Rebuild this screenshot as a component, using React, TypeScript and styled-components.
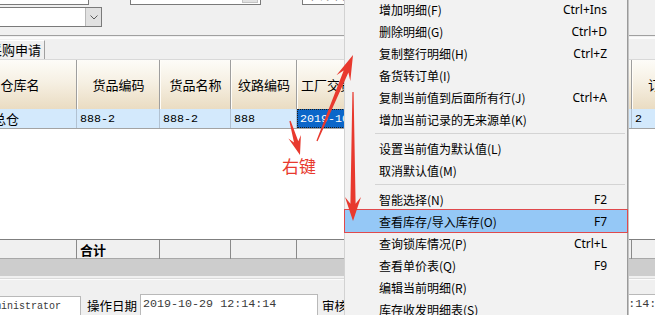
import { FC } from "react";
import styled, { createGlobalStyle } from "styled-components";

const COLS = "114px 83px 71px 66px 86px 80px 85px 84px 84px";
const RED = "#e8392e";

type Pt = [number, number];

// tapered annotation arrow, as drawn by a screenshot tool
const arrowPoints = (tail: Pt, tip: Pt, head: number, wing: number, neck: number, tailW: number) => {
  const dx = tip[0] - tail[0];
  const dy = tip[1] - tail[1];
  const len = Math.hypot(dx, dy);
  const ux = dx / len;
  const uy = dy / len;
  const nx = -uy;
  const ny = ux;
  const base: Pt = [tip[0] - ux * head, tip[1] - uy * head];
  const notch: Pt = [tip[0] - ux * head * 0.72, tip[1] - uy * head * 0.72];
  const p = (c: Pt, w: number) => `${(c[0] + nx * w).toFixed(1)},${(c[1] + ny * w).toFixed(1)}`;
  return [
    p(tail, tailW),
    p(notch, neck),
    p(base, wing),
    `${tip[0]},${tip[1]}`,
    p(base, -wing),
    p(notch, -neck),
    p(tail, -tailW),
  ].join(" ");
};

const GlobalStyle = createGlobalStyle`
  html, body {
    margin: 0;
    padding: 0;
    background: #f0f0f0;
  }
  body {
    font-family: "Noto Sans CJK SC", sans-serif;
  }
`;

const Page = styled.div`
  position: relative;
  width: 655px;
  height: 315px;
  overflow: hidden;
  background: #f0f0f0;
  display: flex;
  flex-direction: column;
`;

const TopRow = styled.div`
  height: 5px;
  flex-shrink: 0;
  overflow: hidden;
  display: flex;
  align-items: flex-end;
`;

const TopBox = styled.div<{ $gap: number; $width: number }>`
  margin-left: ${(p) => p.$gap}px;
  width: ${(p) => p.$width}px;
  height: 22px;
  flex-shrink: 0;
  box-sizing: border-box;
  border: 1px solid #7a7a7a;
  background: #fff;
  overflow: hidden;
  display: flex;
  justify-content: flex-end;
  align-items: flex-end;
  font-family: "Liberation Mono", monospace;
  font-size: 12px;
  line-height: 12px;
  color: #000;
`;

const TopBoxText = styled.span`
  flex: 1;
  padding: 0 0 0 3px;
  margin-bottom: 2px;
  letter-spacing: 2px;
`;

const TopBoxButton = styled.div`
  width: 16px;
  height: 18px;
  margin: 1px 2px 1px 0;
  background: #e1e1e1;
  border: 1px solid #c4c4c4;
  box-sizing: border-box;
`;

const Combo = styled.div`
  margin: 2px 0 0 -10px;
  width: 112px;
  height: 20px;
  flex-shrink: 0;
  box-sizing: border-box;
  border: 1px solid #7a7a7a;
  background: #fff;
  display: flex;
  justify-content: flex-end;
`;

const ComboButton = styled.div`
  width: 15px;
  background: #e1e1e1;
  border-left: 1px solid #b8b8b8;
  display: flex;
  align-items: center;
  justify-content: center;
`;

const Rule = styled.div<{ $top: number }>`
  margin-top: ${(p) => p.$top}px;
  height: 1px;
  flex-shrink: 0;
  border-top: 1px solid #a0a0a0;
  border-bottom: 2px solid #fbfbfb;
`;

const ThinRule = styled.div`
  margin-top: 2px;
  flex-shrink: 0;
  border-top: 1px solid #dadada;
  border-bottom: 1px solid #fcfcfc;
`;

const TabStrip = styled.div`
  margin-top: 1px;
  height: 19px;
  flex-shrink: 0;
  display: flex;
  border-bottom: 1px solid #d9d9d9;
`;

const Tab = styled.div`
  margin-left: -14px;
  padding: 0 3px;
  border-top: 1px solid #fff;
  border-right: 1px solid #a0a0a0;
  background: #f0f0f0;
  font-size: 13px;
  line-height: 18px;
  color: #000;
  white-space: nowrap;
`;

const Grid = styled.div`
  margin-left: -37px;
  width: max-content;
  flex-shrink: 0;
  display: flex;
  flex-direction: column;
`;

const HeaderRow = styled.div`
  display: grid;
  grid-template-columns: ${COLS};
  height: 49px;
  background: linear-gradient(#fdfcf8, #f6f0e3 45%, #eadcc2);
`;

const HeaderCell = styled.div`
  box-sizing: border-box;
  border-right: 1px solid #9e9e9e;
  border-left: 1px solid #fffdf8;
  display: flex;
  align-items: center;
  justify-content: center;
  font-size: 13px;
  color: #000;
  white-space: nowrap;
  overflow: hidden;
`;

const DataRow = styled.div`
  display: grid;
  grid-template-columns: ${COLS};
  height: 20px;
  box-sizing: border-box;
  border-bottom: 1px solid #a3a3a3;
  background: #d3e9fc;
`;

const DataCell = styled.div<{ $indent?: number; $selected?: boolean; $cjk?: boolean }>`
  box-sizing: border-box;
  border-right: 1px solid #b2c2d2;
  padding-left: ${(p) => p.$indent ?? 3}px;
  display: flex;
  align-items: center;
  font-family: ${(p) => (p.$cjk ? '"Noto Sans CJK SC", sans-serif' : '"Liberation Mono", monospace')};
  font-size: ${(p) => (p.$cjk ? 13 : 11.7)}px;
  color: ${(p) => (p.$selected ? "#fff" : "#000")};
  background: ${(p) => (p.$selected ? "#0b66c9" : "transparent")};
  outline: ${(p) => (p.$selected ? "1px dotted #1a1a1a" : "none")};
  outline-offset: -1px;
  white-space: nowrap;
  overflow: hidden;
`;

const GridBody = styled.div`
  height: 110px;
  background: #fff;
`;

const FooterRow = styled.div`
  display: grid;
  grid-template-columns: ${COLS};
  height: 20px;
  box-sizing: border-box;
  border-top: 1px solid #7f7f7f;
  border-bottom: 1px solid #a8a8a8;
  background: #f0f0f0;
`;

const FooterCell = styled.div`
  box-sizing: border-box;
  border-right: 1px solid #8a8a8a;
  padding-left: 3px;
  display: flex;
  align-items: center;
  font-size: 13px;
  font-weight: 700;
  color: #000;
`;

const ScrollBar = styled.div`
  height: 17px;
  flex-shrink: 0;
  background: #cdcdcd;
`;

const BottomRow = styled.div`
  margin-top: 14px;
  display: flex;
  align-items: flex-start;
  flex-shrink: 0;
`;

const Field = styled.div<{ $gap: number; $width: number; $size: number; $drop?: number }>`
  margin-left: ${(p) => p.$gap}px;
  margin-top: ${(p) => p.$drop ?? 0}px;
  width: ${(p) => p.$width}px;
  height: 24px;
  flex-shrink: 0;
  box-sizing: border-box;
  border: 1px solid #b9b9b9;
  background: #fff;
  padding: 2px 0 0 2px;
  font-family: "Liberation Mono", monospace;
  font-size: ${(p) => p.$size}px;
  line-height: 15px;
  color: #3a3a3a;
  white-space: nowrap;
  overflow: hidden;
`;

const Label = styled.div<{ $gap: number; $width: number }>`
  margin-left: ${(p) => p.$gap}px;
  margin-top: 3px;
  width: ${(p) => p.$width}px;
  flex-shrink: 0;
  font-size: 12.5px;
  line-height: 18px;
  color: #000;
  white-space: nowrap;
`;

const Menu = styled.div`
  position: absolute;
  left: 344px;
  top: -2px;
  width: 284px;
  box-sizing: border-box;
  background: #f2f2f2;
  border-left: 1px solid #d2d2d2;
  border-right: 1px solid #9a9a9a;
  box-shadow: 1px 0 0 #c4c4c4;
  display: flex;
  flex-direction: column;
  z-index: 2;
`;

const MenuItem = styled.div<{ $active?: boolean }>`
  height: 22px;
  flex-shrink: 0;
  display: flex;
  align-items: center;
  justify-content: space-between;
  padding: 0 20px 0 34px;
  font-family: "Noto Sans CJK SC", sans-serif;
  font-size: 12px;
  color: #000;
  background: ${(p) => (p.$active ? "#95c8f6" : "transparent")};
  outline: ${(p) => (p.$active ? "1px solid #e0494c" : "none")};
  white-space: nowrap;
`;

const Shortcut = styled.span`
  font-family: "Noto Sans", sans-serif;
  font-size: 12px;
`;

const Separator = styled.div`
  height: 1px;
  margin: 3px 2px 3px 30px;
  background: #d4d4d4;
`;

const Overlay = styled.svg`
  position: absolute;
  left: 0;
  top: 0;
  pointer-events: none;
  z-index: 3;
`;

const Note = styled.div`
  position: absolute;
  left: 282px;
  top: 155px;
  font-size: 17px;
  line-height: 22px;
  color: ${RED};
  z-index: 3;
`;

interface MenuEntry {
  label: string;
  key?: string;
  active?: boolean;
}

const MENU: (MenuEntry | "sep")[] = [
  { label: "增加明细(F)", key: "Ctrl+Ins" },
  { label: "删除明细(G)", key: "Ctrl+D" },
  { label: "复制整行明细(H)", key: "Ctrl+Z" },
  { label: "备货转订单(I)" },
  { label: "复制当前值到后面所有行(J)", key: "Ctrl+A" },
  { label: "增加当前记录的无来源单(K)" },
  "sep",
  { label: "设置当前值为默认值(L)" },
  { label: "取消默认值(M)" },
  "sep",
  { label: "智能选择(N)", key: "F2" },
  { label: "查看库存/导入库存(O)", key: "F7", active: true },
  { label: "查询锁库情况(P)", key: "Ctrl+L" },
  { label: "查看单价表(Q)", key: "F9" },
  { label: "编辑当前明细(R)" },
  { label: "库存收发明细表(S)" },
];

const HEADERS = ["仓库名", "货品编码", "货品名称", "纹路编码", "工厂交货日期", "数量", "单价", "金额", "订货数量"];

const ContextMenu: FC = () => (
  <Menu>
    {MENU.map((m, i) =>
      m === "sep" ? (
        <Separator key={i} />
      ) : (
        <MenuItem key={i} $active={m.active}>
          <span>{m.label}</span>
          {m.key && <Shortcut>{m.key}</Shortcut>}
        </MenuItem>
      )
    )}
  </Menu>
);

const Arrows: FC = () => (
  <Overlay width={655} height={315} viewBox="0 0 655 315">
    <polygon fill={RED} points={arrowPoints([317, 141], [353, 55], 25, 7.5, 2.6, 0.6)} />
    <polygon fill={RED} points={arrowPoints([290, 121], [300, 155], 19, 6.5, 2.2, 0.6)} />
    <polygon fill={RED} points={arrowPoints([353, 92], [353, 221], 24, 8, 2.6, 0.6)} />
  </Overlay>
);

const App: FC = () => (
  <Page>
    <GlobalStyle />
    <TopRow>
      <TopBox $gap={-20} $width={109} />
      <TopBox $gap={41} $width={131}>
        <TopBoxButton />
      </TopBox>
      <TopBox $gap={41} $width={250}>
        <TopBoxText>年月日</TopBoxText>
      </TopBox>
    </TopRow>

    <Combo>
      <ComboButton>
        <svg width="8" height="5" viewBox="0 0 8 5">
          <polyline points="0.5,0.5 4,4 7.5,0.5" fill="none" stroke="#5a5a5a" strokeWidth="1" />
        </svg>
      </ComboButton>
    </Combo>

    <Rule $top={8} />

    <TabStrip>
      <Tab>采购申请</Tab>
    </TabStrip>

    <Grid>
      <HeaderRow>
        {HEADERS.map((h) => (
          <HeaderCell key={h}>{h}</HeaderCell>
        ))}
      </HeaderRow>
      <DataRow>
        <DataCell $cjk $indent={30}>总仓</DataCell>
        <DataCell>888-2</DataCell>
        <DataCell>888-2</DataCell>
        <DataCell>888</DataCell>
        <DataCell $selected>2019-10-29</DataCell>
        <DataCell>10</DataCell>
        <DataCell>0</DataCell>
        <DataCell>0</DataCell>
        <DataCell>2</DataCell>
      </DataRow>
      <GridBody />
      <FooterRow>
        <FooterCell />
        <FooterCell>合计</FooterCell>
        <FooterCell />
        <FooterCell />
        <FooterCell />
        <FooterCell />
        <FooterCell />
        <FooterCell />
        <FooterCell />
      </FooterRow>
    </Grid>

    <ScrollBar />
    <ThinRule />

    <BottomRow>
      <Field $gap={-20} $width={101} $size={10} $drop={2}>Administrator</Field>
      <Label $gap={6} $width={50}>操作日期</Label>
      <Field $gap={3} $width={178} $size={11.7}>2019-10-29 12:14:14</Field>
      <Label $gap={4} $width={39}>审核人</Label>
      <Field $gap={3} $width={116} $size={11.7} />
      <Label $gap={4} $width={50}>审核日期</Label>
      <Field $gap={0} $width={160} $size={11.7}>2019-10-29 12:14:14</Field>
    </BottomRow>

    <ContextMenu />
    <Arrows />
    <Note>右键</Note>
  </Page>
);

export default App;
